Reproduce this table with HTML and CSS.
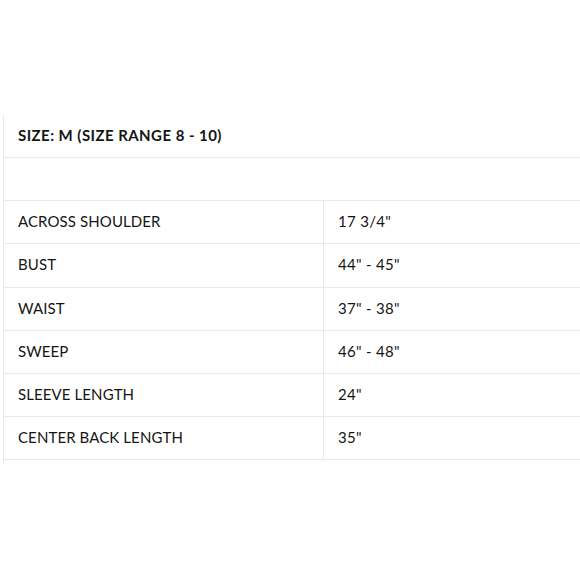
FILE: index.html
```html
<!DOCTYPE html>
<html>
<head>
<meta charset="utf-8">
<link rel="stylesheet" href="styles.css">
</head>
<body>
<div class="sheet">
  <div class="row head"><div class="cell title">SIZE: M (SIZE RANGE 8 - 10)</div></div>
  <div class="row blank"></div>
  <div class="row"><div class="cell label">ACROSS SHOULDER</div><div class="cell value">17 3/4"</div></div>
  <div class="row"><div class="cell label">BUST</div><div class="cell value">44" - 45"</div></div>
  <div class="row"><div class="cell label">WAIST</div><div class="cell value">37" - 38"</div></div>
  <div class="row"><div class="cell label">SWEEP</div><div class="cell value">46" - 48"</div></div>
  <div class="row"><div class="cell label">SLEEVE LENGTH</div><div class="cell value">24"</div></div>
  <div class="row"><div class="cell label">CENTER BACK LENGTH</div><div class="cell value">35"</div></div>
</div>
</body>
</html>
```
FILE: styles.css
```css
html, body {
  margin: 0;
  padding: 0;
  background: #fff;
}
body {
  font-family: "Lato", "Liberation Sans", sans-serif;
  color: #151515;
  font-size: 15px;
}
.sheet {
  margin: 115px 0 0 3px;
  border-left: 1px solid #ebe9e4;
  padding-bottom: 3px;
}
.row {
  display: grid;
  grid-template-columns: 319px 1fr;
  height: 42.15px;
  border-bottom: 1px solid #ebe9e4;
  align-items: stretch;
}
.row.head, .row.blank {
  grid-template-columns: 1fr;
}
.cell {
  display: flex;
  align-items: center;
  padding-bottom: 2px;
}
.title {
  padding-left: 14px;
  font-weight: 700;
  letter-spacing: 0.45px;
}
.label {
  padding-left: 14px;
  letter-spacing: 0.1px;
}
.value {
  border-left: 1px solid #ebe9e4;
  padding-left: 14px;
  letter-spacing: 0.3px;
}
```
